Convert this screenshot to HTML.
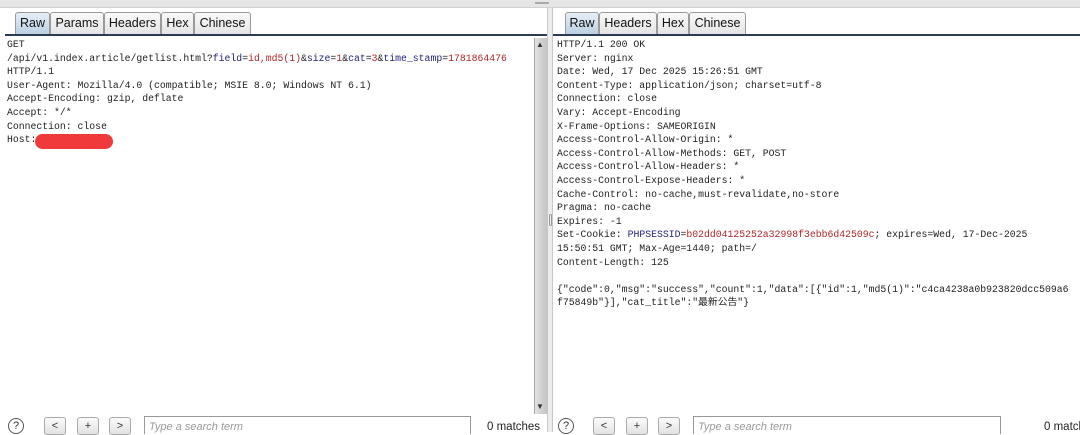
<!DOCTYPE html>
<html><head><meta charset="utf-8"><style>
*{margin:0;padding:0;box-sizing:border-box}
body{width:1080px;height:432px;background:#fff;position:relative;overflow:hidden;font-family:"Liberation Sans",Arial,sans-serif}
.topbar{position:absolute;left:0;top:0;width:1080px;height:8px;background:#e6e6e6;border-bottom:1px solid #d0d0d0}
.tab{position:absolute;top:12px;height:23px;border:1px solid #9a9a9a;border-bottom:none;border-radius:3px 3px 0 0;background:linear-gradient(#fafafa,#e4e4e4);font-size:12.5px;color:#111;line-height:21px;text-align:center}
.tab.sel{background:linear-gradient(#e6eef6,#b9cfe2)}
.tabline{position:absolute;top:34px;height:2px;background:#2b3a55}
pre{position:absolute;font-family:"Liberation Mono","Noto Sans CJK SC",monospace;font-size:9.8px;line-height:13.6px;color:#222;white-space:pre}
.b{color:#23237a}.r{color:#b0262a}
.sb{position:absolute;left:534px;top:38px;width:13px;height:376px;background:linear-gradient(90deg,#e2e2e2,#d2d2d2 50%,#c4c4c4);border-left:1px solid #aaa}
.div{position:absolute;left:547px;top:8px;width:6px;height:424px;background:#ececec;border-left:1px solid #c8c8c8;border-right:1px solid #c8c8c8}
.q{position:absolute;top:418px;width:16px;height:16px;border:1px solid #555;border-radius:50%;font-size:11px;text-align:center;line-height:14px;color:#333}
.btn{position:absolute;top:417px;width:22px;height:18px;border:1px solid #aaa;border-radius:3px;background:linear-gradient(#fbfbfb,#e2e2e2);font-size:11px;text-align:center;line-height:16px;color:#333}
.inp{position:absolute;top:416px;height:18px;border:1px solid #999;border-bottom:none;font-style:italic;font-size:11px;color:#999;padding:3px 4px;line-height:14px;white-space:nowrap}
.m{position:absolute;top:421px;font-size:11.5px;color:#222;white-space:nowrap}
</style></head><body>
<div class="topbar"></div>
<div style="position:absolute;left:535px;top:2px;width:14px;height:2px;border-top:1px solid #aaa;border-bottom:1px solid #aaa"></div>

<div class="tab sel" style="left:15px;width:35px">Raw</div>
<div class="tab" style="left:50px;width:54px">Params</div>
<div class="tab" style="left:104px;width:57px">Headers</div>
<div class="tab" style="left:161px;width:33px">Hex</div>
<div class="tab" style="left:194px;width:57px">Chinese</div>
<div class="tabline" style="left:5px;width:542px"></div>

<div class="tab sel" style="left:565px;width:34px">Raw</div>
<div class="tab" style="left:599px;width:58px">Headers</div>
<div class="tab" style="left:657px;width:32px">Hex</div>
<div class="tab" style="left:689px;width:57px">Chinese</div>
<div class="tabline" style="left:553px;width:527px"></div>

<pre style="left:7px;top:38px">GET
/api/v1.index.article/getlist.html?<span class="b">field</span>=<span class="r">id,md5(1)</span>&amp;<span class="b">size</span>=<span class="r">1</span>&amp;<span class="b">cat</span>=<span class="r">3</span>&amp;<span class="b">time_stamp</span>=<span class="r">1781864476</span>
HTTP/1.1
User-Agent: Mozilla/4.0 (compatible; MSIE 8.0; Windows NT 6.1)
Accept-Encoding: gzip, deflate
Accept: */*
Connection: close
Host:</pre>
<div style="position:absolute;left:35px;top:134px;width:78px;height:15px;background:#f0393a;border-radius:8px"></div>

<div class="sb"></div>
<div style="position:absolute;left:536px;top:40px;font-size:8px;color:#333">▲</div>
<div style="position:absolute;left:536px;top:402px;font-size:8px;color:#333">▼</div>
<div class="div"></div>
<div style="position:absolute;left:549px;top:214px;width:3px;height:12px;border:1px solid #999;border-radius:2px"></div>

<pre style="left:557px;top:38px">HTTP/1.1 200 OK
Server: nginx
Date: Wed, 17 Dec 2025 15:26:51 GMT
Content-Type: application/json; charset=utf-8
Connection: close
Vary: Accept-Encoding
X-Frame-Options: SAMEORIGIN
Access-Control-Allow-Origin: *
Access-Control-Allow-Methods: GET, POST
Access-Control-Allow-Headers: *
Access-Control-Expose-Headers: *
Cache-Control: no-cache,must-revalidate,no-store
Pragma: no-cache
Expires: -1
Set-Cookie: <span class="b">PHPSESSID</span>=<span class="r">b02dd04125252a32998f3ebb6d42509c</span>; expires=Wed, 17-Dec-2025
15:50:51 GMT; Max-Age=1440; path=/
Content-Length: 125

{"code":0,"msg":"success","count":1,"data":[{"id":1,"md5(1)":"c4ca4238a0b923820dcc509a6
f75849b"}],"cat_title":"最新公告"}</pre>

<div class="q" style="left:8px">?</div>
<div class="btn" style="left:44px">&lt;</div>
<div class="btn" style="left:77px">+</div>
<div class="btn" style="left:109px">&gt;</div>
<div class="inp" style="left:144px;width:327px">Type a search term</div>
<div class="m" style="left:487px">0 matches</div>

<div class="q" style="left:558px">?</div>
<div class="btn" style="left:593px">&lt;</div>
<div class="btn" style="left:626px">+</div>
<div class="btn" style="left:658px">&gt;</div>
<div class="inp" style="left:693px;width:308px">Type a search term</div>
<div class="m" style="left:1044px">0 matches</div>
</body></html>
